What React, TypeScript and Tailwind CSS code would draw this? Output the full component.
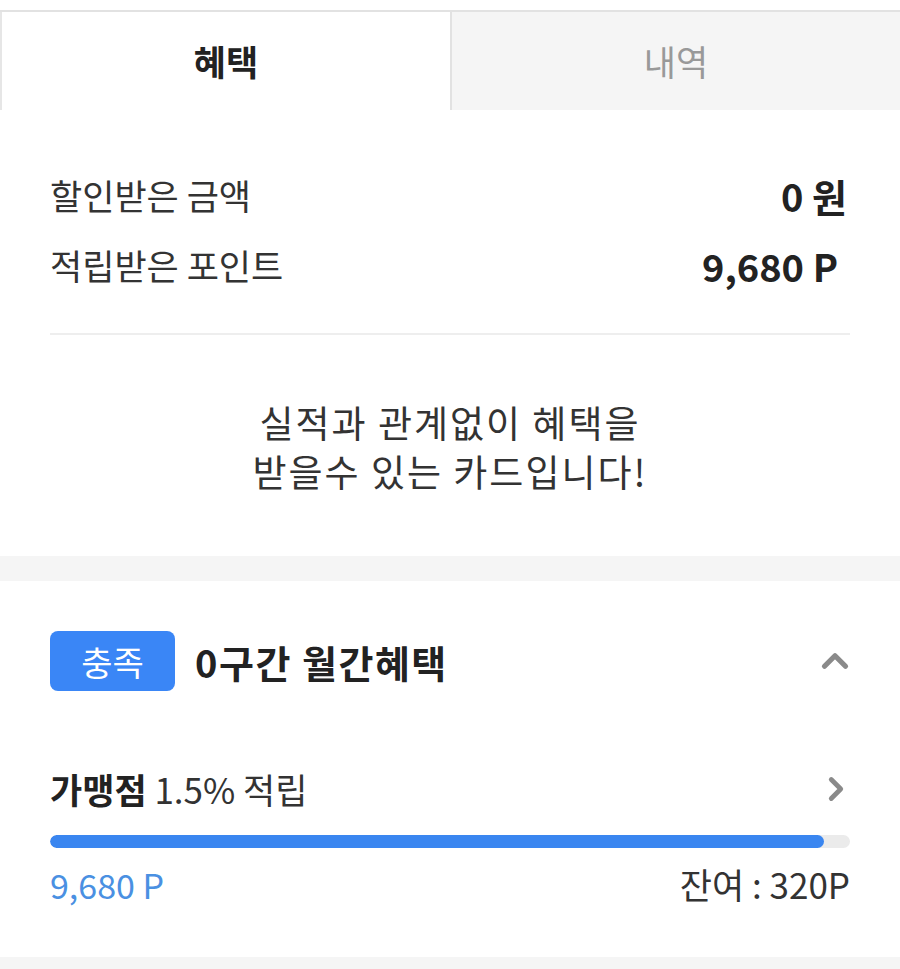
import { ChevronUp, ChevronRight } from 'lucide-react';

const font = { fontFamily: '"Noto Sans CJK KR", "Noto Sans", sans-serif' };

export default function App() {
  return (
    <div className="w-[900px] bg-white text-[#333]" style={font}>
      {/* Tabs */}
      <div className="pt-[10px]">
        <div className="flex h-[100px] border-t-2 border-[#e2e2e2]">
          <div className="flex-1 flex items-center justify-center bg-white border-l-2 border-[#e6e6e6]">
            <span className="text-[35px] font-bold text-[#222]">혜택</span>
          </div>
          <div className="flex-1 flex items-center justify-center bg-[#f5f5f5] border-l-2 border-[#e2e2e2]">
            <span className="text-[35px] text-[#999]">내역</span>
          </div>
        </div>
      </div>

      {/* Summary */}
      <div className="px-[50px] pt-[60px]">
        <div className="flex items-center justify-between h-[50px]">
          <span className="text-[35px]">할인받은 금액</span>
          <span className="text-[38px] font-bold text-[#222] mr-[3px]">0 원</span>
        </div>
        <div className="flex items-center justify-between h-[50px] mt-[20px]">
          <span className="text-[35px]">적립받은 포인트</span>
          <span className="text-[38px] font-bold text-[#222] mr-[12px]">9,680 P</span>
        </div>
        <div className="h-[2px] bg-[#eeeeee] mt-[43px]" />
        <div className="text-center text-[37px] tracking-[2px] leading-[49px] pt-[63px] pb-[60px]">
          <p>실적과 관계없이 혜택을</p>
          <p>받을수 있는 카드입니다!</p>
        </div>
      </div>

      <div className="h-[25px] bg-[#f5f5f5]" />

      {/* Monthly benefit */}
      <div className="px-[50px] pt-[50px] pb-[48px]">
        <div className="flex items-center justify-between h-[60px]">
          <div className="flex items-center gap-[20px]">
            <span className="h-[60px] w-[125px] flex items-center justify-center rounded-[8px] bg-[#3a86f6] text-white text-[34px]">충족</span>
            <span className="text-[38px] tracking-[1.5px] font-bold text-[#222]">0구간 월간혜택</span>
          </div>
          <ChevronUp className="w-[42px] h-[42px] text-[#8a8a8a] mr-[-6px]" strokeWidth={3} />
        </div>

        <div className="flex items-center justify-between h-[50px] mt-[73px]">
          <div className="text-[35px]">
            <span className="font-bold text-[#222]">가맹점</span> 1.5% 적립
          </div>
          <ChevronRight className="w-[38px] h-[38px] text-[#8a8a8a] mr-[-5px]" strokeWidth={3} />
        </div>

        <div className="mt-[21px] h-[13px] rounded-full bg-[#ebebeb] overflow-hidden">
          <div className="h-full rounded-full bg-[#3a86f0]" style={{ width: '96.8%' }} />
        </div>

        <div className="flex items-center justify-between h-[50px] mt-[11px]">
          <span className="text-[34px] text-[#4a90e2]">9,680 P</span>
          <span className="text-[35px] text-[#333]">잔여 : 320P</span>
        </div>
      </div>

      <div className="h-[25px] bg-[#f5f5f5]" />
    </div>
  );
}
